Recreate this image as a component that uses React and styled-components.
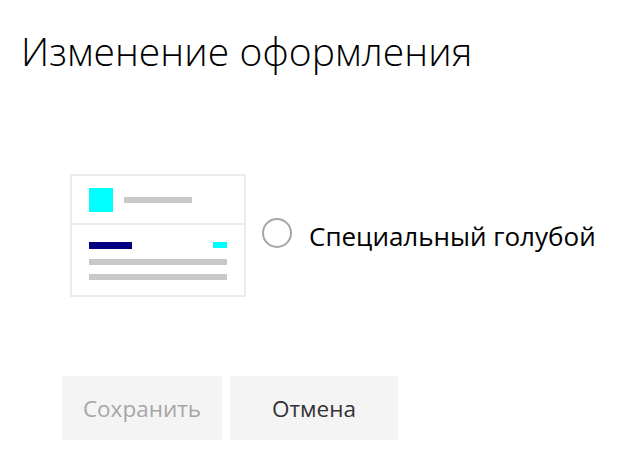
import React from "react";
import styled, { createGlobalStyle } from "styled-components";

const Global = createGlobalStyle`
  html, body { margin: 0; padding: 0; background: #fff; }
  body { font-family: "Open Sans", "Noto Sans", sans-serif; color: #000; }
`;

const Page = styled.div`
  width: 618px;
  height: 471px;
  display: flex;
  flex-direction: column;
  box-sizing: border-box;
  padding-top: 25px;
`;

const Title = styled.h1`
  margin: 0 0 0 21px;
  font-size: 39px;
  font-weight: 300;
  line-height: 52px;
  letter-spacing: 0.1px;
  color: #000;
`;

const OptionRow = styled.div`
  display: flex;
  align-items: center;
  margin: 97px 0 0 70px;
`;

const Card = styled.div`
  width: 176px;
  height: 123px;
  box-sizing: border-box;
  border: 2px solid #ebebeb;
  display: flex;
  flex-direction: column;
`;

const CardHead = styled.div`
  height: 49px;
  box-sizing: border-box;
  border-bottom: 2px solid #ebebeb;
  display: flex;
  align-items: center;
  padding-left: 17px;
  gap: 11px;
`;

const Swatch = styled.div`
  width: ${p => p.w}px;
  height: ${p => p.h}px;
  background: ${p => p.c};
  flex: none;
`;

const CardBody = styled.div`
  display: flex;
  flex-direction: column;
  padding: 17px 17px 0 17px;
  gap: 9px;
`;

const BodyTop = styled.div`
  display: flex;
  justify-content: space-between;
  align-items: flex-start;
  height: 8px;
`;

const Line = styled.div`
  height: 6px;
  background: #c8c8c8;
`;

const Radio = styled.span`
  width: 30px;
  height: 30px;
  box-sizing: border-box;
  border: 2px solid #a6a6a6;
  border-radius: 50%;
  margin-left: 16px;
  margin-top: -6px;
  flex: none;
`;

const Label = styled.span`
  margin-left: 17px;
  margin-top: 1px;
  font-size: 26px;
  color: #000;
`;

const Buttons = styled.div`
  display: flex;
  gap: 8px;
  margin: 79px 0 0 62px;
`;

const Button = styled.button`
  width: ${p => p.w}px;
  height: 64px;
  border: none;
  background: #f4f4f4;
  font-family: "Open Sans", "Noto Sans", sans-serif;
  font-size: 22.5px;
  color: ${p => (p.disabled ? "#a6a6a6" : "#333")};
  padding: 0;
`;

export default function App() {
  return (
    <>
      <Global />
      <Page>
        <Title>Изменение оформления</Title>
        <OptionRow>
          <Card>
            <CardHead>
              <Swatch w={24} h={24} c="#00ffff" />
              <Swatch w={68} h={6} c="#c8c8c8" />
            </CardHead>
            <CardBody>
              <BodyTop>
                <Swatch w={43} h={7} c="#000080" />
                <Swatch w={14} h={6} c="#00ffff" />
              </BodyTop>
              <Line />
              <Line />
            </CardBody>
          </Card>
          <Radio />
          <Label>Специальный голубой</Label>
        </OptionRow>
        <Buttons>
          <Button w={160} disabled>Сохранить</Button>
          <Button w={168}>Отмена</Button>
        </Buttons>
      </Page>
    </>
  );
}
